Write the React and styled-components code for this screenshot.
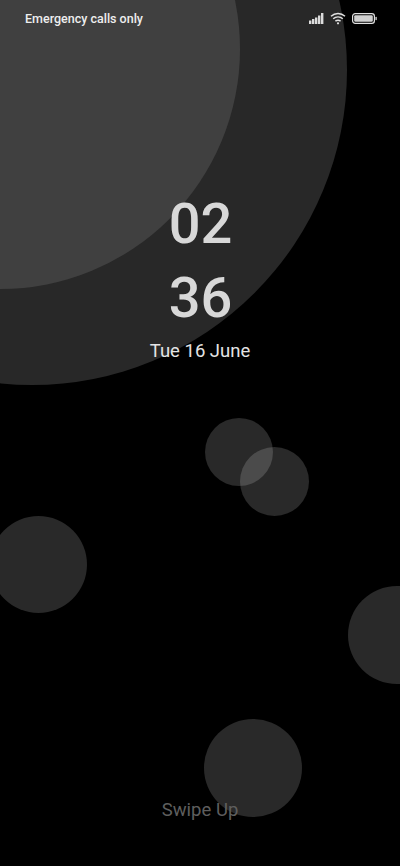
import styled, { createGlobalStyle } from "styled-components"

const GlobalStyle = createGlobalStyle`
    html, body {
        margin: 0;
        padding: 0;
        background: #000;
    }
`

const bubbles = [
    { x: 205, y: 418, size: 68 },
    { x: 240, y: 447, size: 69 },
    { x: -10, y: 516, size: 97 },
    { x: 348, y: 586, size: 98 },
    { x: 204, y: 719, size: 98 },
]

function SignalIcon() {
    return (
        <svg width="15" height="11" viewBox="0 0 15 11" fill="#dcdcdc">
            <rect x="0" y="7.5" width="2.4" height="3.5" />
            <rect x="3" y="6" width="2.4" height="5" />
            <rect x="6" y="4.5" width="2.4" height="6.5" />
            <rect x="9" y="2.5" width="2.4" height="8.5" />
            <rect x="12" y="0" width="2.4" height="11" />
        </svg>
    )
}

function WifiIcon() {
    return (
        <svg width="16" height="13" viewBox="0 0 16 13" fill="none" stroke="#e0e0e0" strokeWidth="1.5">
            <path d="M1 4.2C5 .6 11 .6 15 4.2" />
            <path d="M3.2 6.7C6 4.3 10 4.3 12.8 6.7" />
            <path d="M5.4 9.1C6.9 8 9.1 8 10.6 9.1" />
            <circle cx="8" cy="11.3" r="1.1" fill="#e0e0e0" stroke="none" />
        </svg>
    )
}

function BatteryIcon() {
    return (
        <svg width="25" height="11" viewBox="0 0 25 11">
            <rect x="0.6" y="0.6" width="21.8" height="9.8" rx="2.6" fill="none" stroke="#e0e0e0" strokeWidth="1.2" />
            <rect x="2.2" y="2.2" width="18.6" height="6.6" rx="1.2" fill="#cfcfcf" />
            <rect x="23.4" y="3.8" width="1.4" height="3.4" rx="0.7" fill="#d0d0d0" />
        </svg>
    )
}

export default function App() {
    return (
        <>
            <GlobalStyle />
            <Screen>
                <OuterCircle />
                <InnerCircle />
                {bubbles.map((b, i) => (
                    <Bubble key={i} $x={b.x} $y={b.y} $size={b.size} />
                ))}
                <StatusBar>
                    <Carrier>Emergency calls only</Carrier>
                    <StatusIcons>
                        <SignalIcon />
                        <WifiIcon />
                        <BatteryIcon />
                    </StatusIcons>
                </StatusBar>
                <Clock>
                    <Digits>02</Digits>
                    <Digits>36</Digits>
                    <DateLine>Tue 16 June</DateLine>
                </Clock>
                <Swipe>Swipe Up</Swipe>
            </Screen>
        </>
    )
}

const Screen = styled.div`
    position: relative;
    width: 400px;
    height: 866px;
    overflow: hidden;
    background: #000;
    display: flex;
    flex-direction: column;
    font-family: Roboto, "Liberation Sans", sans-serif;
`
const OuterCircle = styled.div`
    position: absolute;
    left: -283px;
    top: -245px;
    width: 630px;
    height: 630px;
    border-radius: 50%;
    background: #282828;
`
const InnerCircle = styled.div`
    position: absolute;
    left: -240px;
    top: -191px;
    width: 480px;
    height: 480px;
    border-radius: 50%;
    background: #404040;
`
const Bubble = styled.div`
    position: absolute;
    left: ${(p) => p.$x}px;
    top: ${(p) => p.$y}px;
    width: ${(p) => p.$size}px;
    height: ${(p) => p.$size}px;
    border-radius: 50%;
    background: rgba(255, 255, 255, 0.16);
`
const StatusBar = styled.div`
    position: relative;
    display: flex;
    align-items: center;
    justify-content: space-between;
    height: 37px;
    padding: 0 23px 0 25px;
`
const Carrier = styled.div`
    font-size: 12.5px;
    font-weight: 500;
    color: #eeeeee;
`
const StatusIcons = styled.div`
    display: flex;
    align-items: center;
    gap: 6px;
`
const Clock = styled.div`
    position: relative;
    display: flex;
    flex-direction: column;
    align-items: center;
    margin-top: 150px;
`
const Digits = styled.div`
    padding-left: 1px;
    font-size: 56px;
    line-height: 74px;
    font-weight: 500;
    color: #d8d8d8;
`
const DateLine = styled.div`
    margin-top: 4px;
    font-size: 18.5px;
    line-height: 24px;
    color: #e4e4e4;
`
const Swipe = styled.div`
    position: relative;
    margin-top: 435px;
    text-align: center;
    font-size: 18.5px;
    line-height: 24px;
    color: #5e5e5e;
`
